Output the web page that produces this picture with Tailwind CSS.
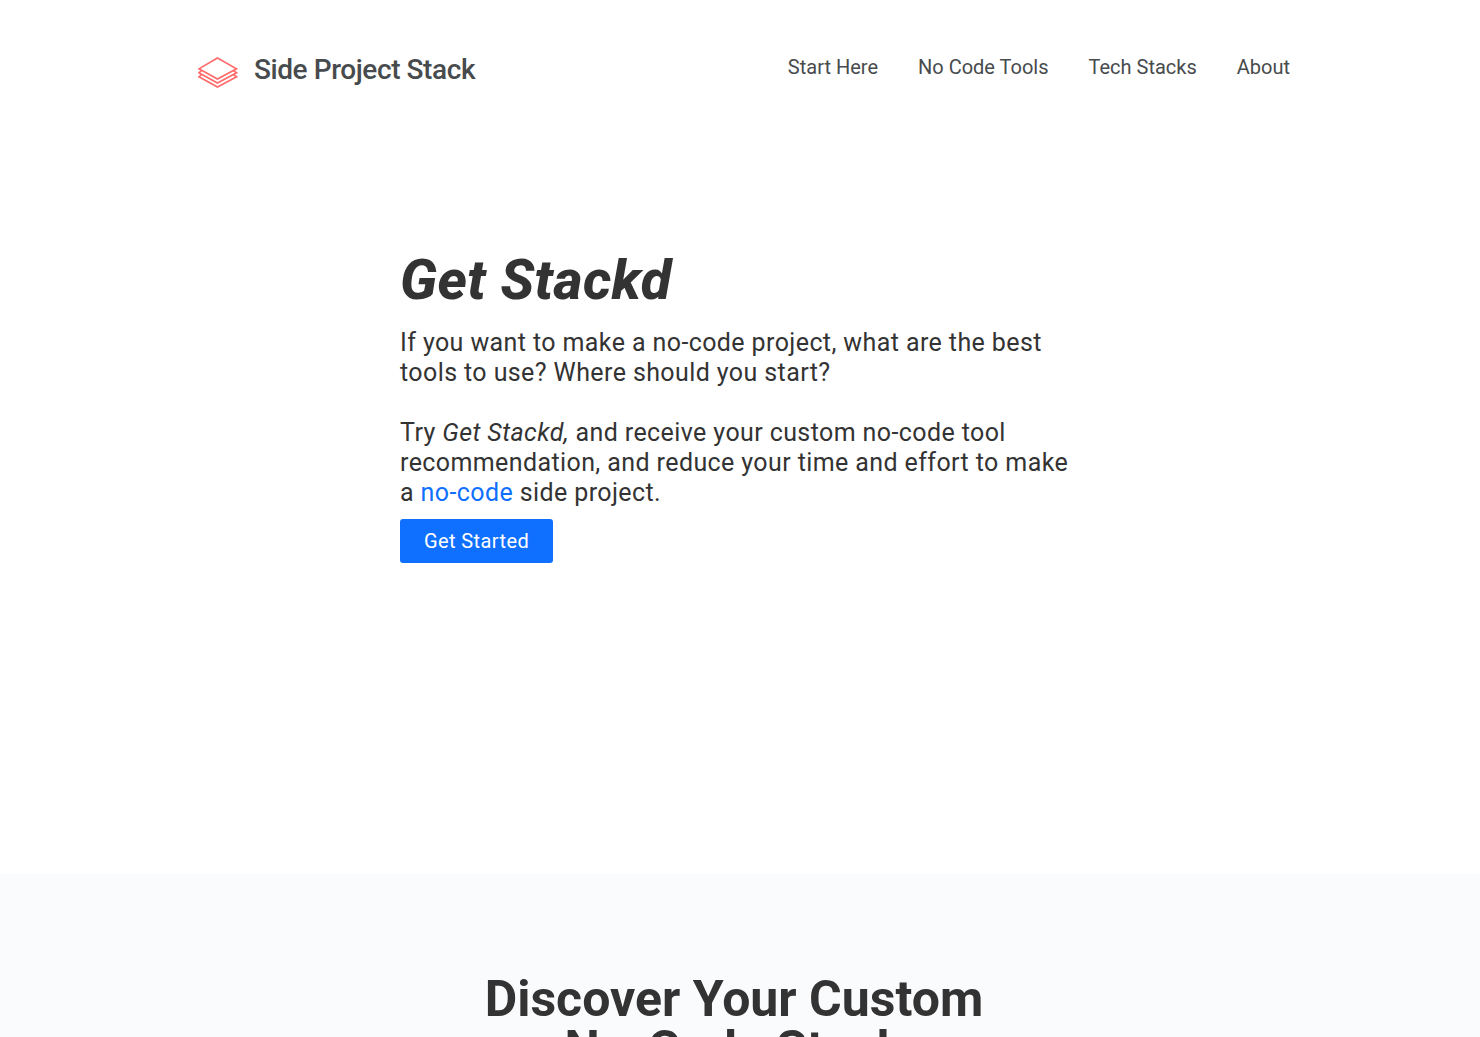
<!DOCTYPE html>
<html lang="en">
<head>
  <meta charset="UTF-8">
  <meta name="viewport" content="width=device-width, initial-scale=1.0">
  <title>Side Project Stack</title>
  <script src="https://cdn.jsdelivr.net/npm/@tailwindcss/browser@4"></script>
</head>
<body class="bg-white font-[Roboto,sans-serif] text-[#333]">
  <!-- Header -->
  <header class="mx-auto flex max-w-[1100px] items-start justify-between pt-12">
    <a href="#" class="flex items-center gap-4 pl-2">
      <svg class="mt-1 h-10 w-10" viewBox="0 0 40 40" fill="none" stroke="#ff6b6b" stroke-width="1.6" stroke-linejoin="miter">
        <path d="M19.5 6 38.5 16.8 19.5 27 .9 16.8Z"/>
        <path d="M3.5 18.7 .9 20.8 19.5 31 38.5 20.8 35.5 18.7"/>
        <path d="M3.5 22.7 .9 24.8 19.5 35 38.5 24.8 35.5 22.7"/>
      </svg>
      <span class="text-[28px] font-medium tracking-[-0.015em] text-[#474b4d]">Side Project Stack</span>
    </a>
    <nav class="flex gap-10 pt-[5px] text-xl text-[#474b4d]">
      <a href="#">Start Here</a>
      <a href="#">No Code Tools</a>
      <a href="#">Tech Stacks</a>
      <a href="#">About</a>
    </nav>
  </header>

  <!-- Hero -->
  <main>
    <section class="mx-auto max-w-[680px] pt-[158px] pb-[311px] text-xl tracking-[0.02em]">
      <h1 class="text-[56px] leading-[60px] font-extrabold italic">Get Stackd</h1>
      <div class="mt-[18px] text-[25px] leading-[30px]">
        <p>If you want to make a no-code project, what are the best tools to use? Where should you start?</p>
        <p class="mt-[30px]">Try <em>Get Stackd,</em> and receive your custom no-code tool recommendation, and reduce your time and effort to make a <a href="#" class="text-[#0f6fff]">no-code</a> side project.</p>
      </div>
      <button type="button" class="mt-[11px] block h-11 rounded-[3px] bg-[#0f6fff] px-6 text-white">Get Started</button>
    </section>

    <!-- Discover -->
    <section class="bg-[#fafbfd] pt-[100px] pr-3 pb-24">
      <h2 class="mx-auto max-w-[560px] text-center text-[50px] leading-[50px] font-bold">Discover Your Custom<br>No-Code Stack</h2>
    </section>
  </main>
</body>
</html>
